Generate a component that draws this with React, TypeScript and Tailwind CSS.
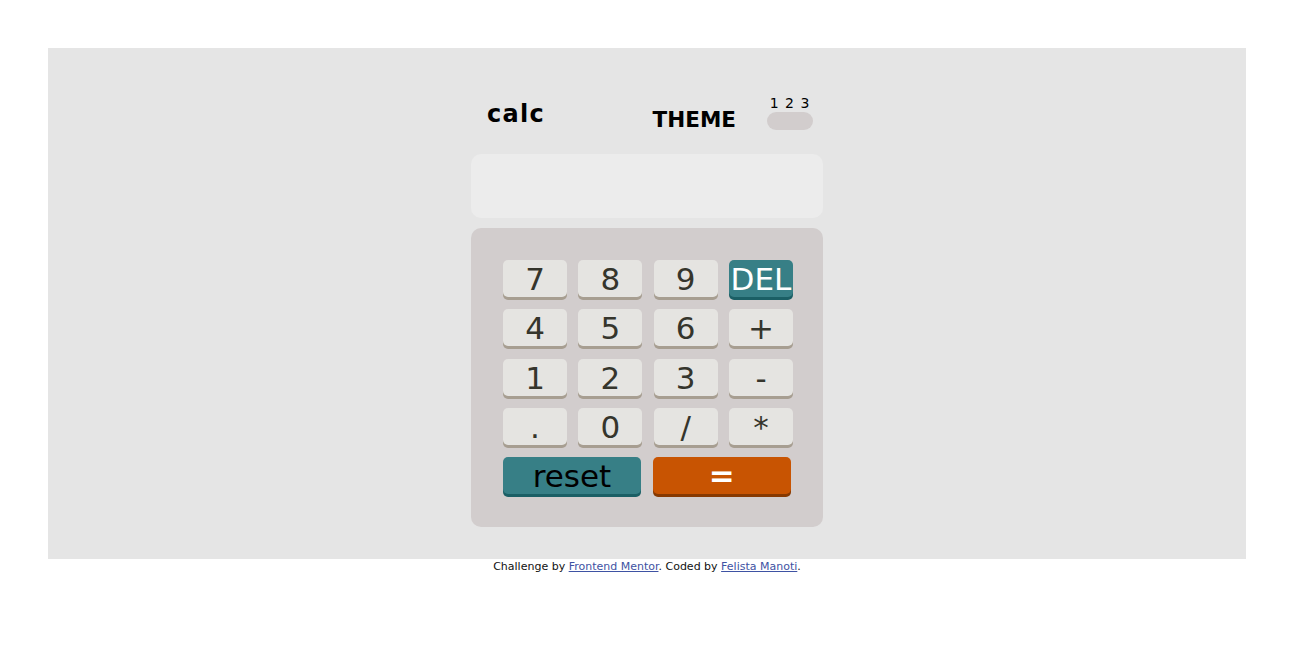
import React from "react";

const font = { fontFamily: '"DejaVu Sans", sans-serif' };

type Key = { label: string; kind?: "del" | "reset" | "eq" };

const keys: Key[] = [
  { label: "7" },
  { label: "8" },
  { label: "9" },
  { label: "DEL", kind: "del" },
  { label: "4" },
  { label: "5" },
  { label: "6" },
  { label: "+" },
  { label: "1" },
  { label: "2" },
  { label: "3" },
  { label: "-" },
  { label: "." },
  { label: "0" },
  { label: "/" },
  { label: "*" },
];

const keyClass = (kind?: Key["kind"]) => {
  if (kind === "del") return "bg-[#377f86] text-white shadow-[0_3px_0_#1b5f65]";
  if (kind === "reset") return "bg-[#377f86] text-black shadow-[0_3px_0_#1b5f65]";
  if (kind === "eq") return "bg-[#c85402] text-white shadow-[0_3px_0_#873901]";
  return "bg-[#e5e4e1] text-[#35352c] shadow-[0_3px_0_#a79e91]";
};

const App = () => {
  return (
    <div className="h-[656px] bg-white pt-12" style={font}>
      {/* Main panel */}
      <div className="mx-12 h-[511px] bg-[#e5e5e5] pt-12">
        <div className="mx-auto w-[352px]">
          {/* Header */}
          <div className="flex h-[34px] items-end justify-between pl-4 pr-[10px]">
            <h1 className="mb-[2px] text-[24px] font-bold leading-[28px] tracking-[1.3px] text-black">
              calc
            </h1>
            <div className="flex items-end gap-[31px]">
              <span className="-mb-[2px] text-[21.5px] font-bold leading-[24px] text-black">THEME</span>
              <div className="flex w-[46px] flex-col items-center">
                <span className="pt-px text-[14px] leading-[16px] tracking-[1px] text-black">1 2 3</span>
                <div className="mt-[1px] h-[18px] w-[46px] rounded-full bg-[#d2cdcd]" />
              </div>
            </div>
          </div>

          {/* Display */}
          <div className="mt-6 h-16 rounded-[10px] bg-[#ececec]" />

          {/* Keypad */}
          <div className="mt-[10px] h-[299px] rounded-[10px] bg-[#d2cdcd] pl-8 pr-[30px] pt-8">
            <div className="grid grid-cols-[repeat(4,64px)] justify-between gap-y-[12.25px]">
              {keys.map((k) => (
                <button
                  key={k.label}
                  className={`flex h-[37px] items-center justify-center rounded-[5px] pt-[2px] text-[31px] leading-none ${keyClass(k.kind)}`}
                >
                  {k.label}
                </button>
              ))}
              <button
                className={`col-span-2 flex h-[37px] w-[138px] items-center justify-center rounded-[5px] pt-[2px] text-[31px] leading-none ${keyClass("reset")}`}
              >
                reset
              </button>
              <button
                className={`col-span-2 -ml-px flex h-[37px] w-[138px] items-center justify-center rounded-[5px] text-[31px] font-bold leading-none ${keyClass("eq")}`}
              >
                =
              </button>
            </div>
          </div>
        </div>
      </div>

      {/* Footer */}
      <p className="pt-px text-center text-[11px] leading-[14px] text-[#111]">
        Challenge by{" "}
        <a href="#" className="text-[#3e52a3] underline">
          Frontend Mentor
        </a>
        . Coded by{" "}
        <a href="#" className="text-[#3e52a3] underline">
          Felista Manoti
        </a>
        .
      </p>
    </div>
  );
};

export default App;
